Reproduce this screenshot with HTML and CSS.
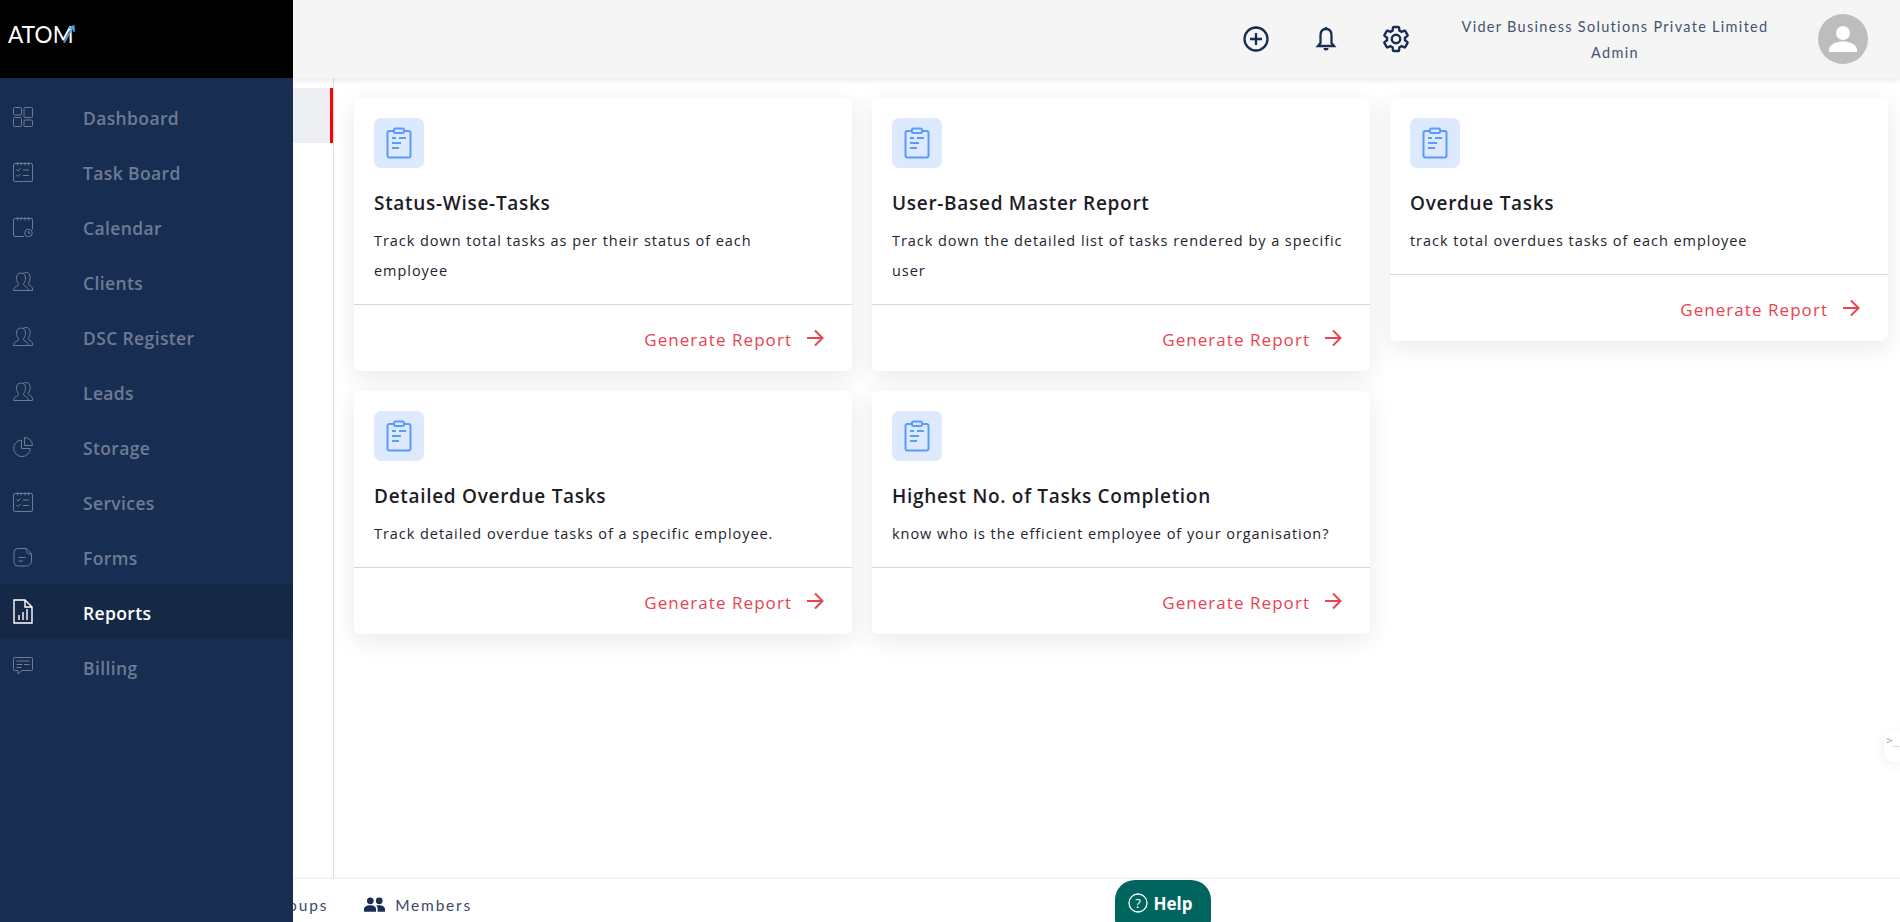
FILE: index.html
```html
<!DOCTYPE html>
<html lang="en">
<head>
<meta charset="utf-8">
<title>ATOM Reports</title>
<link rel="stylesheet" href="styles.css">
</head>
<body>
<svg class="defs" width="0" height="0" aria-hidden="true">
  <symbol id="i-dash" viewBox="0 0 20 20"><rect x=".5" y=".5" width="8" height="7.5" rx="1"/><rect x="11" y=".5" width="8.5" height="10" rx="1"/><rect x=".5" y="10.5" width="8" height="9" rx="1"/><rect x="11" y="13" width="8.5" height="6.5" rx="1"/></symbol>
  <symbol id="i-task" viewBox="0 0 20 20"><rect x=".5" y="1.5" width="19" height="18" rx="1.5"/><path d="M4.5 0v3.5M8 0v3.5M12 0v3.5M15.500 0v3.5M3.500 7.500l1.500 1.500 2.500-2.500M10 8h6M3.500 13l1.500 1.500 2.500-2.500M10 13.500h6"/></symbol>
  <symbol id="i-cal" viewBox="0 0 20 20"><path d="M11 19.500H2a1.500 1.500 0 0 1-1.500-1.500V3A1.500 1.500 0 0 1 2 1.500h16A1.500 1.500 0 0 1 19.500 3v9.500M4.500 0v3.500M8 0v3.500M12 0v3.500M15.500 0v3.500"/><circle cx="15.500" cy="16" r="3.800"/><path d="M15.500 14v2.200h2"/></symbol>
  <symbol id="i-users" viewBox="0 0 20 20"><path d="M.5 18.500c0-3 2.500-4 4.500-5 .8-.5.700-1.500 0-2.500-1-1.500-1.500-3-1.500-5C3.500 3 5 1 8 1s4.500 2 4.500 5c0 2-.5 3.500-1.500 5-.7 1-.8 2 0 2.500 2 1 4 2 4.500 5z"/><path d="M10 1.500C11 .7 12 .5 13 .5c3 0 4.200 2 4.200 5 0 2-.5 3.500-1.500 5-.7 1-.5 1.800.3 2.300 1.500.8 3.300 1.700 3.500 4.200v1.500h-4"/></symbol>
  <symbol id="i-pie" viewBox="0 0 20 20"><path d="M8.500 3a8.300 8.300 0 1 0 8.800 8.500H8.500z"/><path d="M11.500.5v8h8a8 8 0 0 0-8-8z"/></symbol>
  <symbol id="i-form" viewBox="0 0 20 20"><path d="M5 1.500h8.500l5 5.500v7a5 5 0 0 1-5 5H5a4 4 0 0 1-4-4V5.500a4 4 0 0 1 4-4z"/><path d="M13 1.500c-.3 3.500 1 5.700 5.500 5.500M5.500 10.500h7M5.500 14h4.500"/></symbol>
  <symbol id="i-report" viewBox="0 0 20 25"><path class="thick" d="M1 1h11l7 7v16H1zM12 1v7h7"/><path class="thick" d="M6 21v-5M10 21v-8M14 21V10"/></symbol>
  <symbol id="i-chat" viewBox="0 0 20 20"><path d="M1.500.5h17a1 1 0 0 1 1 1v11a1 1 0 0 1-1 1H9l-4 3.500v-3.500H1.500a1 1 0 0 1-1-1v-11a1 1 0 0 1 1-1z"/><path d="M3.500 4h13M3.500 7.500h6M11 7.500h5.500M3.500 10.500h5"/></symbol>
  <symbol id="i-clip" viewBox="0 0 26 32"><rect x="1.500" y="4" width="23" height="26.500" rx="2"/><rect x="8" y="1.500" width="10" height="4.500" rx="1.500" class="clip-top"/><path d="M6 11h4M13 11h7M6 16h9M6 21h7"/></symbol>
  <symbol id="i-arrow" viewBox="0 0 18 18"><path d="M1 9h15M9 1.500 16.500 9 9 16.500"/></symbol>
</svg>

<div class="app">
  <aside class="sidebar">
    <div class="brand">
      <span class="logo">ATOM<svg class="logo-tick" viewBox="0 0 14 20"><path d="M2 19 12 2M7 3.500 12.500 1 13 7"/></svg></span>
    </div>
    <nav class="nav">
      <a class="nav-item"><svg class="nav-icon"><use href="#i-dash"/></svg><span>Dashboard</span></a>
      <a class="nav-item"><svg class="nav-icon"><use href="#i-task"/></svg><span>Task Board</span></a>
      <a class="nav-item"><svg class="nav-icon"><use href="#i-cal"/></svg><span>Calendar</span></a>
      <a class="nav-item"><svg class="nav-icon"><use href="#i-users"/></svg><span>Clients</span></a>
      <a class="nav-item"><svg class="nav-icon"><use href="#i-users"/></svg><span>DSC Register</span></a>
      <a class="nav-item"><svg class="nav-icon"><use href="#i-users"/></svg><span>Leads</span></a>
      <a class="nav-item"><svg class="nav-icon"><use href="#i-pie"/></svg><span>Storage</span></a>
      <a class="nav-item"><svg class="nav-icon"><use href="#i-task"/></svg><span>Services</span></a>
      <a class="nav-item"><svg class="nav-icon"><use href="#i-form"/></svg><span>Forms</span></a>
      <a class="nav-item active"><svg class="nav-icon tall"><use href="#i-report"/></svg><span>Reports</span></a>
      <a class="nav-item"><svg class="nav-icon"><use href="#i-chat"/></svg><span>Billing</span></a>
    </nav>
  </aside>

  <div class="main">
    <header class="topbar">
      <svg class="top-icon plus" viewBox="0 0 26 26"><circle cx="13" cy="13" r="11.500"/><path d="M13 7v12M7 13h12"/></svg>
      <svg class="top-icon bell" viewBox="0 0 24 26"><path d="M12 3c-4 0-5.500 3-5.500 6.500V17L4 20h16l-2.500-3V9.500C17.500 6 16 3 12 3zM12 1v2"/><path class="fill" d="M9.500 22h5a2.500 2.500 0 0 1-5 0z"/></svg>
      <svg class="top-icon gear" viewBox="0 0 24 24"><path d="M19.140 12.940c.04-.3.06-.61.06-.94 0-.32-.02-.64-.07-.94l2.030-1.580c.18-.14.23-.41.12-.61l-1.920-3.320c-.12-.22-.37-.29-.59-.22l-2.390.96c-.5-.38-1.030-.7-1.620-.94l-.36-2.540c-.04-.24-.24-.41-.48-.41h-3.840c-.24 0-.43.17-.47.41l-.36 2.540c-.59.24-1.130.57-1.620.94l-2.390-.96c-.22-.08-.47 0-.59.22L2.740 8.870c-.12.21-.08.47.12.61l2.030 1.580c-.05.3-.09.63-.09.94s.02.64.07.94l-2.030 1.580c-.18.14-.23.41-.12.61l1.920 3.320c.12.22.37.29.59.22l2.390-.96c.5.38 1.030.7 1.620.94l.36 2.540c.05.24.24.41.48.41h3.840c.24 0 .44-.17.47-.41l.36-2.540c.59-.24 1.130-.56 1.620-.94l2.390.96c.22.08.47 0 .59-.22l1.920-3.320c.12-.22.07-.47-.12-.61l-2.010-1.580z"/><circle cx="12" cy="12" r="3.400"/></svg>
      <div class="account">
        <div>Vider Business Solutions Private Limited</div>
        <div>Admin</div>
      </div>
      <div class="avatar"><svg viewBox="0 0 50 50"><circle cx="25" cy="19" r="7"/><path d="M11 36c0-6 8-8.500 14-8.500S39 30 39 36v2H11z"/></svg></div>
    </header>

    <div class="body">
      <div class="subnav"><div class="subnav-item"></div></div>
      <section class="cards">
        <article class="card">
          <div class="card-body">
            <div class="badge"><svg><use href="#i-clip"/></svg></div>
            <h3>Status-Wise-Tasks</h3>
            <p>Track down total tasks as per their status of each employee</p>
          </div>
          <div class="card-foot"><span>Generate Report</span><svg><use href="#i-arrow"/></svg></div>
        </article>
        <article class="card">
          <div class="card-body">
            <div class="badge"><svg><use href="#i-clip"/></svg></div>
            <h3>User-Based Master Report</h3>
            <p>Track down the detailed list of tasks rendered by a specific user</p>
          </div>
          <div class="card-foot"><span>Generate Report</span><svg><use href="#i-arrow"/></svg></div>
        </article>
        <article class="card">
          <div class="card-body">
            <div class="badge"><svg><use href="#i-clip"/></svg></div>
            <h3>Overdue Tasks</h3>
            <p>track total overdues tasks of each employee</p>
          </div>
          <div class="card-foot"><span>Generate Report</span><svg><use href="#i-arrow"/></svg></div>
        </article>
        <article class="card">
          <div class="card-body">
            <div class="badge"><svg><use href="#i-clip"/></svg></div>
            <h3>Detailed Overdue Tasks</h3>
            <p>Track detailed overdue tasks of a specific employee.</p>
          </div>
          <div class="card-foot"><span>Generate Report</span><svg><use href="#i-arrow"/></svg></div>
        </article>
        <article class="card">
          <div class="card-body">
            <div class="badge"><svg><use href="#i-clip"/></svg></div>
            <h3>Highest No. of Tasks Completion</h3>
            <p>know who is the efficient employee of your organisation?</p>
          </div>
          <div class="card-foot"><span>Generate Report</span><svg><use href="#i-arrow"/></svg></div>
        </article>
      </section>
    </div>

    <footer class="tabs">
      <span class="tab clipped">Groups</span>
      <span class="tab"><svg class="tab-icon" viewBox="0 0 20 14"><circle cx="6" cy="3.500" r="3.200"/><circle cx="14.500" cy="3.500" r="3.200"/><path d="M0 14v-2.500C0 9 3 7.800 6 7.800s5.500 1.200 5.500 3.700V14zM13 14v-3c0-1.200-.5-2.200-1.300-3 .9-.2 1.900-.3 2.800-.3 2.700 0 5.500 1.200 5.500 3.800V14z"/></svg>Members</span>
    </footer>
  </div>
</div>

<button class="help"><svg viewBox="0 0 20 20"><circle cx="10" cy="10" r="9"/><text x="10" y="14.500" text-anchor="middle">?</text></svg>Help</button>
<div class="console">&gt;_</div>
</body>
</html>
```
FILE: styles.css
```css
* { box-sizing: border-box; }
html, body { margin: 0; height: 100%; overflow: hidden; }
body { font-family: "Open Sans", "Lato", sans-serif; background: #fff; color: #1d1d27; }
.defs { position: absolute; }

.app { display: flex; height: 922px; }

.sidebar { width: 293px; flex: none; background: #182d52; position: relative; z-index: 3; }
.brand { height: 78px; background: #000; display: flex; align-items: flex-start; padding: 20px 0 0 8px; }
.logo { position: relative; color: #fff; font-family: "Lato", sans-serif; font-size: 22.500px; font-weight: 400; letter-spacing: .2px; line-height: 30px; }
.logo-tick { position: absolute; right: -1px; top: 5px; width: 13px; height: 19px; fill: none; stroke: #4c9fe6; stroke-width: 2; }

.nav { padding-top: 11px; }
.nav-item { height: 55px; display: flex; align-items: center; padding-left: 13px; color: #6d7b94; font-size: 17.500px; font-weight: 600; letter-spacing: .37px; }
.nav-item span { margin-left: 50px; padding-top: 2px; }
.nav-icon { width: 20px; height: 20px; fill: none; stroke: #6d7b94; stroke-width: 1; flex: none; }
.nav-item.active { background: #152947; color: #fff; }
.nav-item.active .nav-icon { stroke: #fff; }
.nav-icon.tall { height: 25px; }
.thick { stroke-width: 1.4; }

.main { flex: 1; min-width: 0; display: flex; flex-direction: column; }

.topbar { height: 78px; flex: none; background: #f5f5f5; box-shadow: 0 2px 6px rgba(0,0,0,.1); display: flex; align-items: center; position: relative; z-index: 2; padding-left: 950px; }
.top-icon { fill: none; stroke: #182d52; stroke-width: 2.300; width: 26px; height: 26px; flex: none; }
.bell { margin-left: 44px; }
.gear { margin-left: 42px; width: 30px; height: 30px; stroke-width: 1.900; }
.fill { fill: #182d52; stroke: none; }
.account { width: 310px; margin-left: 49px; padding-top: 1px; text-align: center; font-family: "Lato", sans-serif; font-size: 14.500px; line-height: 26px; letter-spacing: 1.300px; color: #46536e; flex: none; }
.avatar { width: 50px; height: 50px; border-radius: 50%; background: #bdbdbd; margin-left: 48px; flex: none; }
.avatar svg { width: 50px; height: 50px; fill: #fff; display: block; }

.body { flex: 1; min-height: 0; display: flex; }
.subnav { width: 41px; flex: none; border-right: 1px solid #ddd; padding-top: 10px; }
.subnav-item { height: 55px; background: #eeeff3; border-right: 3px solid #f00; }

.cards { flex: 1; display: grid; grid-template-columns: repeat(3, 1fr); gap: 20px; padding: 20px 12px 0 20px; align-items: start; align-content: start; }
.card { background: #fff; border-radius: 6px; box-shadow: 0 6px 24px rgba(0,0,0,.09); }
.card-body { padding: 20px 20px 18px; }
.badge { width: 50px; height: 50px; background: #dde9fd; border-radius: 7px; display: flex; align-items: center; justify-content: center; }
.badge svg { width: 26px; height: 32px; fill: none; stroke: #5b9bff; stroke-width: 2; }
.clip-top { fill: #dde9fd; }
.card h3 { margin: 20px 0 8px; font-size: 19px; line-height: 30px; font-weight: 600; letter-spacing: .7px; color: #1d1d27; }
.card p { margin: 0; max-width: 454px; font-size: 14.500px; line-height: 30px; letter-spacing: .95px; color: #23232e; }
.card-foot { height: 67px; border-top: 1px solid #d8d8d8; display: flex; align-items: center; justify-content: flex-end; padding-right: 28px; color: #e8434f; font-size: 17px; letter-spacing: 1.050px; }
.card-foot span { padding-top: 2px; }
.card-foot svg { width: 18px; height: 18px; margin-left: 14px; fill: none; stroke: #e8434f; stroke-width: 2; }

.tabs { height: 44px; flex: none; background: #fff; border-top: 1px solid #eee; box-shadow: 0 -1px 3px rgba(0,0,0,.04); display: flex; align-items: center; overflow: hidden; padding-top: 8px; font-family: "Lato", sans-serif; font-size: 15.500px; letter-spacing: 1.800px; color: #3c4a66; }
.tab { display: flex; align-items: center; white-space: nowrap; }
.clipped { margin-left: -25px; }
.tab-icon { width: 21px; height: 15px; fill: #182d52; margin-left: 36px; margin-right: 10px; }

.help { position: absolute; left: 1115px; top: 880px; width: 96px; height: 60px; padding: 0 6px 14px 0; border: 0; border-radius: 20px; background: #00645f; color: #fff; font: 700 17px "Open Sans", sans-serif; display: flex; align-items: center; justify-content: center; z-index: 4; }
.help svg { width: 20px; height: 20px; margin-right: 6px; fill: none; stroke: #fff; stroke-width: 1.300; }
.help text { fill: #fff; stroke: none; font-size: 13px; font-weight: 400; }

.console { position: absolute; right: 0; top: 732px; width: 16px; height: 30px; background: #fff; border-radius: 10px 0 0 10px; box-shadow: 0 2px 12px rgba(120,100,200,.12); color: #aaa; font: 11px "DejaVu Sans Mono", monospace; padding: 2px 0 0 2px; overflow: hidden; white-space: nowrap; z-index: 4; }
```
